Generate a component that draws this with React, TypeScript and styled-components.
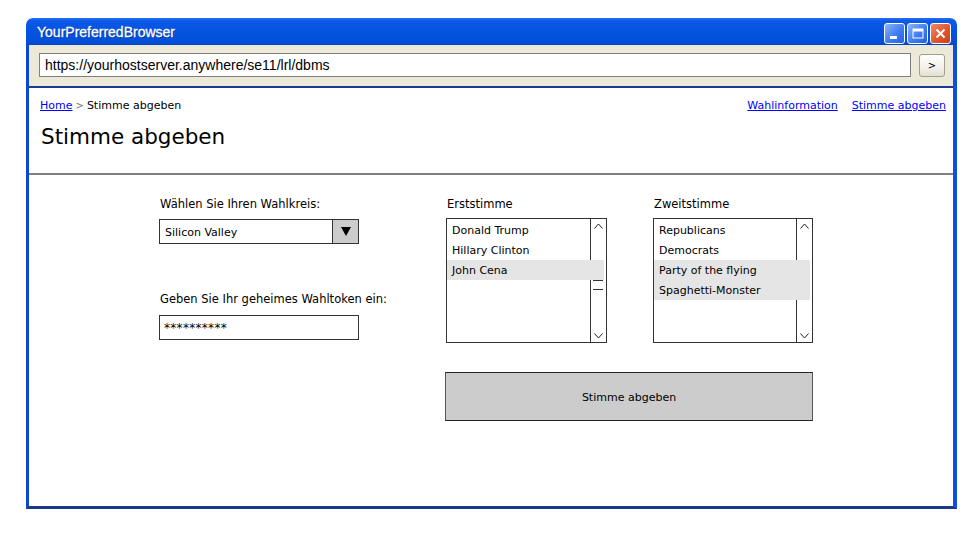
import React from "react";
import styled, { createGlobalStyle } from "styled-components";

const Global = createGlobalStyle`
  html, body { margin: 0; padding: 0; background: #ffffff; }
  * { box-sizing: border-box; }
`;

const Page = styled.div`
  padding: 18px 0 0 26px;
  width: 977px;
  height: 535px;
  overflow: hidden;
`;

const Window = styled.div`
  width: 931px;
  display: flex;
  flex-direction: column;
  border-radius: 7px 7px 0 0;
  overflow: hidden;
`;

const TitleBar = styled.div`
  height: 27px;
  display: flex;
  align-items: center;
  justify-content: space-between;
  padding: 0 6px 0 11px;
  background: linear-gradient(#2a6ff0 0px, #0a58e6 3px, #0353e1 14px, #024fd8 24px, #0146c8 27px);
`;

const Title = styled.span`
  font-family: "Liberation Sans", Arial, sans-serif;
  font-size: 14px;
  color: #ffffff;
  text-shadow: 1px 1px 0 #0a2e8a;
  -webkit-text-stroke: 0.3px #ffffff;
`;

const Controls = styled.div`
  display: flex;
  gap: 2px;
  margin-top: 4px;
`;

const CtrlButton = styled.div<{ $close?: boolean }>`
  width: 21px;
  height: 21px;
  border: 1px solid #ffffff;
  border-radius: 3px;
  display: flex;
  align-items: center;
  justify-content: center;
  background: ${(p) =>
    p.$close
      ? "linear-gradient(135deg, #f08a6a, #e0562e 55%, #c8401c)"
      : "linear-gradient(135deg, #8fb4f8, #3f7ef2 55%, #2460e0)"};
`;

const Frame = styled.div`
  display: flex;
  flex-direction: column;
  border-left: 3px solid #0a48d2;
  border-right: 4px solid #0c50e2;
  border-bottom: 3px solid #1c3a8c;
`;

const AddressBar = styled.div`
  height: 41px;
  background: #ece9d8;
  display: flex;
  align-items: flex-start;
  gap: 8px;
  padding: 8px 8px 0 10px;
`;

const UrlField = styled.div`
  flex: 1;
  height: 24px;
  background: #ffffff;
  border: 1px solid #7f7f7f;
  display: flex;
  align-items: center;
  padding-left: 5px;
  font-family: "Liberation Sans", Arial, sans-serif;
  font-size: 14px;
  color: #000000;
`;

const GoButton = styled.div`
  width: 26px;
  height: 23px;
  margin-top: 1px;
  border: 1px solid #a39f8f;
  border-radius: 3px;
  background: linear-gradient(#ffffff, #f2f1ea 60%, #e3e0d2);
  display: flex;
  align-items: center;
  justify-content: center;
  font-family: "DejaVu Sans", sans-serif;
  font-size: 10px;
  color: #000;
`;

const Content = styled.div`
  height: 420px;
  background: #ffffff;
  border-top: 2px solid #1b3a90;
  font-family: "DejaVu Sans", sans-serif;
  color: #000000;
`;

const Header = styled.div`
  padding: 9px 7px 0 11px;
`;

const TopRow = styled.div`
  display: flex;
  justify-content: space-between;
  align-items: center;
  height: 16px;
  font-size: 11px;
`;

const Crumbs = styled.div`
  display: flex;
  align-items: center;
  gap: 3px;
`;

const Link = styled.a`
  color: #0000ff;
  text-decoration: underline;
  cursor: pointer;
`;

const Sep = styled.span`
  color: #777777;
  font-size: 10px;
`;

const Nav = styled.nav`
  display: flex;
  gap: 14px;
`;

const Heading = styled.h1`
  margin: 9px 0 0 1px;
  height: 30px;
  line-height: 30px;
  font-size: 21.5px;
  font-weight: normal;
`;

const Divider = styled.div`
  margin-top: 21px;
  height: 2px;
  background: #808080;
`;

const Form = styled.div`
  display: grid;
  grid-template-columns: 200px 87px 160px 47px 160px;
  padding: 21px 0 0 130px;
  align-items: start;
`;

const Column = styled.div<{ $col: number }>`
  grid-column: ${(p) => p.$col};
  grid-row: 1;
  display: flex;
  flex-direction: column;
`;

const Label = styled.div<{ $gap?: number }>`
  height: 16px;
  line-height: 16px;
  font-size: 11.5px;
  white-space: nowrap;
  margin-top: ${(p) => p.$gap ?? 0}px;
  padding-left: 1px;
`;

const Select = styled.div`
  margin-top: 7px;
  height: 25px;
  border: 1px solid #333333;
  display: flex;
  font-size: 11px;
`;

const SelectText = styled.div`
  flex: 1;
  display: flex;
  align-items: center;
  padding: 2px 0 0 5px;
`;

const DropButton = styled.div`
  width: 26px;
  border-left: 1px solid #333333;
  background: #cccccc;
  display: flex;
  align-items: center;
  justify-content: center;
`;

const TextInput = styled.div`
  margin-top: 8px;
  height: 25px;
  border: 1px solid #333333;
  display: flex;
  align-items: center;
  padding: 1px 0 0 4px;
  font-size: 12px;
  letter-spacing: 0.3px;
`;

const ListBox = styled.div<{ $w: number }>`
  margin-top: 6px;
  width: ${(p) => p.$w}px;
  height: 125px;
  border: 1px solid #333333;
  display: flex;
`;

const Items = styled.div`
  flex: 1;
  padding-top: 1px;
  display: flex;
  flex-direction: column;
`;

const Item = styled.div<{ $sel?: boolean }>`
  height: 20px;
  line-height: 22px;
  padding-left: 5px;
  font-size: 11px;
  background: ${(p) => (p.$sel ? "#e5e5e5" : "transparent")};
  margin-right: ${(p) => (p.$sel ? "-14px" : "0")};
  position: relative;
  z-index: 1;
`;

const ScrollBar = styled.div`
  width: 16px;
  border-left: 1px solid #333333;
  display: flex;
  flex-direction: column;
  justify-content: space-between;
  align-items: center;
  padding: 4px 0 3px;
  position: relative;
`;

const Thumb = styled.div`
  position: absolute;
  left: 2px;
  right: 3px;
  top: 61px;
  height: 10px;
  border-top: 1px solid #333;
  border-bottom: 1px solid #333;
`;

const SubmitButton = styled.div`
  grid-column: 3 / 6;
  grid-row: 2;
  margin-top: 29px;
  margin-left: -1px;
  height: 49px;
  padding-top: 2px;
  background: #cccccc;
  border: 1px solid #555555;
  border-top-color: #222;
  border-bottom-color: #222;
  display: flex;
  align-items: center;
  justify-content: center;
  font-size: 11px;
`;

const Up = () => (
  <svg width="9" height="6" viewBox="0 0 9 6">
    <path d="M0.5 5.5 L4.5 1 L8.5 5.5" fill="none" stroke="#222" strokeWidth="1" />
  </svg>
);
const Down = () => (
  <svg width="9" height="6" viewBox="0 0 9 6">
    <path d="M0.5 0.5 L4.5 5 L8.5 0.5" fill="none" stroke="#222" strokeWidth="1" />
  </svg>
);

type ListProps = { w: number; items: string[]; sel: number[]; thumb?: boolean };
const List = ({ w, items, sel, thumb }: ListProps) => (
  <ListBox $w={w}>
    <Items>
      {items.map((t, i) => (
        <Item key={t} $sel={sel.includes(i)}>
          {t}
        </Item>
      ))}
    </Items>
    <ScrollBar>
      <Up />
      {thumb && <Thumb />}
      <Down />
    </ScrollBar>
  </ListBox>
);

export default function App() {
  return (
    <>
      <Global />
      <Page>
        <Window>
          <TitleBar>
            <Title>YourPreferredBrowser</Title>
            <Controls>
              <CtrlButton>
                <svg width="13" height="13" viewBox="0 0 13 13">
                  <rect x="2" y="9" width="7" height="3" fill="#fff" />
                </svg>
              </CtrlButton>
              <CtrlButton>
                <svg width="13" height="13" viewBox="0 0 13 13">
                  <rect x="2" y="2" width="10" height="9" fill="none" stroke="#fff" strokeWidth="1" />
                  <rect x="2" y="2" width="10" height="2.5" fill="#fff" />
                </svg>
              </CtrlButton>
              <CtrlButton $close>
                <svg width="13" height="13" viewBox="0 0 13 13">
                  <path d="M2.5 2.5 L10.5 10.5 M10.5 2.5 L2.5 10.5" stroke="#fff" strokeWidth="2" />
                </svg>
              </CtrlButton>
            </Controls>
          </TitleBar>
          <Frame>
            <AddressBar>
              <UrlField>https://yourhostserver.anywhere/se11/lrl/dbms</UrlField>
              <GoButton>&gt;</GoButton>
            </AddressBar>
            <Content>
              <Header>
                <TopRow>
                  <Crumbs>
                    <Link>Home</Link>
                    <Sep>&gt;</Sep>
                    <span>Stimme abgeben</span>
                  </Crumbs>
                  <Nav>
                    <Link>Wahlinformation</Link>
                    <Link>Stimme abgeben</Link>
                  </Nav>
                </TopRow>
                <Heading>Stimme abgeben</Heading>
              </Header>
              <Divider />
              <Form>
                <Column $col={1}>
                  <Label>Wählen Sie Ihren Wahlkreis:</Label>
                  <Select>
                    <SelectText>Silicon Valley</SelectText>
                    <DropButton>
                      <svg width="10" height="9" viewBox="0 0 10 9">
                        <path d="M0 0 H10 L5 9 Z" fill="#000" />
                      </svg>
                    </DropButton>
                  </Select>
                  <Label $gap={47}>Geben Sie Ihr geheimes Wahltoken ein:</Label>
                  <TextInput>**********</TextInput>
                </Column>
                <Column $col={3}>
                  <Label>Erststimme</Label>
                  <List
                    w={161}
                    items={["Donald Trump", "Hillary Clinton", "John Cena"]}
                    sel={[2]}
                    thumb
                  />
                </Column>
                <Column $col={5}>
                  <Label>Zweitstimme</Label>
                  <List
                    w={160}
                    items={["Republicans", "Democrats", "Party of the flying", "Spaghetti-Monster"]}
                    sel={[2, 3]}
                  />
                </Column>
                <SubmitButton>Stimme abgeben</SubmitButton>
              </Form>
            </Content>
          </Frame>
        </Window>
      </Page>
    </>
  );
}
